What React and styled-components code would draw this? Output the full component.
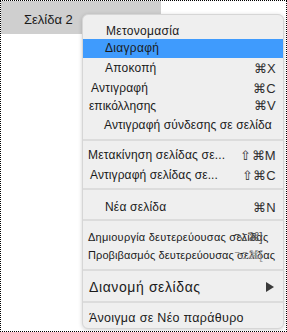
import React from "react";
import styled, { createGlobalStyle } from "styled-components";

const GlobalStyle = createGlobalStyle`
  html, body {
    margin: 0;
    padding: 0;
    background: #ffffff;
  }
  body {
    font-family: "Liberation Sans", Arial, sans-serif;
    color: #1d1d1d;
  }
`;

const Page = styled.div`
  position: relative;
  width: 287px;
  height: 332px;
  box-sizing: border-box;
  border: 1px dotted #000;
  background: #ffffff;
  overflow: hidden;
`;

const TabBar = styled.div`
  width: 160px;
  height: 33px;
  background: #cfcfcf;
  display: flex;
  align-items: center;
  padding-left: 23px;
  box-sizing: border-box;
`;

const TabLabel = styled.span`
  font-size: 13px;
  color: #1a1a1a;
  margin-top: 4px;
`;

const Menu = styled.div`
  position: absolute;
  left: 81px;
  top: 13px;
  width: 202px;
  height: 315px;
  box-sizing: border-box;
  padding-top: 8px;
  background: #efefef;
  border: 1px solid #d6d6d6;
  border-radius: 6px;
  box-shadow: 0 1px 4px rgba(0, 0, 0, 0.18);
  display: flex;
  flex-direction: column;
`;

const Row = styled.div`
  position: relative;
  height: ${(p) => p.$h}px;
  display: flex;
  align-items: center;
  padding-left: ${(p) => p.$indent}px;
  padding-right: 7px;
  background: ${(p) => (p.$active ? "#3f9bfd" : "transparent")};
  font-size: ${(p) => p.$size || 12}px;
  letter-spacing: ${(p) => p.$spacing || 0}px;
  white-space: nowrap;
  color: #1b1b1b;
`;

const Label = styled.span`
  flex: 1 0 auto;
`;

const Shortcut = styled.span`
  font-size: 13px;
  color: #2e2e2e;
  letter-spacing: 0.3px;
`;

const GhostShortcut = styled.span`
  position: absolute;
  right: 21px;
  top: 50%;
  transform: translateY(-50%);
  font-size: 12px;
  color: ${(p) => p.$color};
  letter-spacing: -0.5px;
`;

const Separator = styled.div`
  height: 2px;
  background: #dcdcdc;
  margin: ${(p) => p.$top}px 0 ${(p) => p.$bottom}px;
`;

const Arrow = styled.svg`
  width: 8px;
  height: 10px;
  margin-right: 2px;
`;

export default function App() {
  return (
    <>
      <GlobalStyle />
      <Page>
        <TabBar>
          <TabLabel>Σελίδα 2</TabLabel>
        </TabBar>
        <Menu>
          <Row $h={16} $indent={23} $spacing={0.3}>
            <Label>Μετονομασία</Label>
          </Row>
          <Row $h={19} $indent={22} $spacing={0.3} $active>
            <Label>Διαγραφή</Label>
          </Row>
          <Row $h={21} $indent={22} $spacing={0.2}>
            <Label>Αποκοπή</Label>
            <Shortcut>⌘X</Shortcut>
          </Row>
          <Row $h={19} $indent={8} $spacing={0.2}>
            <Label>Αντιγραφή</Label>
            <Shortcut>⌘C</Shortcut>
          </Row>
          <Row $h={16} $indent={6}>
            <Label>επικόλλησης</Label>
            <Shortcut>⌘V</Shortcut>
          </Row>
          <Row $h={22} $indent={21} $spacing={0.1}>
            <Label>Αντιγραφή σύνδεσης σε σελίδα</Label>
          </Row>
          <Separator $top={3} $bottom={4} />
          <Row $h={21} $indent={5} $spacing={0.2}>
            <Label>Μετακίνηση σελίδας σε...</Label>
            <Shortcut>⇧⌘M</Shortcut>
          </Row>
          <Row $h={20} $indent={7} $spacing={0.1}>
            <Label>Αντιγραφή σελίδας σε...</Label>
            <Shortcut>⇧⌘C</Shortcut>
          </Row>
          <Separator $top={3} $bottom={6} />
          <Row $h={22} $indent={22} $spacing={0.2}>
            <Label>Νέα σελίδα</Label>
            <Shortcut>⌘N</Shortcut>
          </Row>
          <Separator $top={1} $bottom={6} />
          <Row $h={19} $indent={5} $size={11} $spacing={0.25}>
            <Label>Δημιουργία δευτερεύουσας σελίδας</Label>
            <GhostShortcut $color="#555">⌥⌘]</GhostShortcut>
          </Row>
          <Row $h={17} $indent={5} $size={11} $spacing={0.1}>
            <Label>Προβιβασμός δευτερεύουσας σελίδας</Label>
            <GhostShortcut $color="#9a9a9a">⌥⌘[</GhostShortcut>
          </Row>
          <Separator $top={6} $bottom={5} />
          <Row $h={22} $indent={6} $size={14} $spacing={0.6}>
            <Label>Διανομή σελίδας</Label>
            <Arrow viewBox="0 0 8 10">
              <path d="M0 0 L8 5 L0 10 Z" fill="#3a3a3a" />
            </Arrow>
          </Row>
          <Separator $top={3} $bottom={5} />
          <Row $h={20} $indent={6} $size={12.5} $spacing={0.3}>
            <Label>Άνοιγμα σε Νέο παράθυρο</Label>
          </Row>
        </Menu>
      </Page>
    </>
  );
}
